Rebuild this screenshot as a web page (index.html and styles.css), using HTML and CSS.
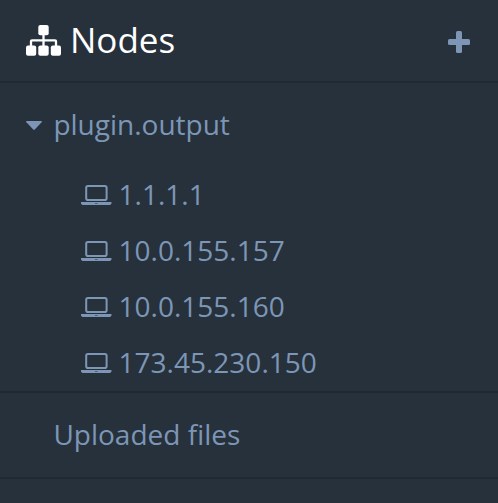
FILE: index.html
```
<!DOCTYPE html>
<html lang="en">
<head>
  <meta charset="UTF-8">
  <meta name="viewport" content="width=device-width, initial-scale=1.0">
  <title>Nodes</title>
  <link rel="stylesheet" href="styles.css">
</head>
<body>
  <svg class="symbols">
    <symbol id="laptop" viewBox="0 0 31 22">
      <rect x="5.200" y="2" width="20.400" height="14" rx="1.800" fill="none" stroke="currentColor" stroke-width="2"/>
      <path fill-rule="evenodd" fill="currentColor" d="M0 18h30.500v1.200c0 1-1.300 1.800-2.600 1.800h-25.300C1.300 21 0 20.200 0 19.200zM14 19v.6h2.700v-.6z"/>
    </symbol>
  </svg>

  <div class="sidebar">
    <header class="sidebar-header">
      <svg class="icon-sitemap" width="35" height="31" viewBox="0 0 35 31" fill="currentColor">
        <rect x="12.300" y="0" width="10.400" height="10.300" rx="2"/>
        <rect x="0" y="20.500" width="10.200" height="10.300" rx="2"/>
        <rect x="12.300" y="20.500" width="10.400" height="10.300" rx="2"/>
        <rect x="24.800" y="20.500" width="10.200" height="10.300" rx="2"/>
        <path d="M5 21v-4.700q0-1 1-1h23q1 0 1 1V21M17.500 9v12" fill="none" stroke="currentColor" stroke-width="2.300"/>
      </svg>
      <h1>Nodes</h1>
      <button class="add" aria-label="Add">
        <svg width="22" height="22" viewBox="0 0 22 22" fill="currentColor">
          <rect x="8" y="0" width="6" height="22" rx="1.500"/>
          <rect x="0" y="8" width="22" height="6" rx="1.500"/>
        </svg>
      </button>
    </header>

    <section class="group">
      <div class="group-title">
        <svg class="caret" width="16" height="9" viewBox="0 0 16 9"><path fill="currentColor" d="M.8 0h14.400q1.200.2.400 1.300L8.800 8.400q-.8.700-1.600 0L.4 1.300Q-.4.200.8 0z"/></svg>
        <span>plugin.output</span>
      </div>
      <ul class="nodes">
        <li><svg class="laptop"><use href="#laptop"/></svg>1.1.1.1</li>
        <li><svg class="laptop"><use href="#laptop"/></svg>10.0.155.157</li>
        <li><svg class="laptop"><use href="#laptop"/></svg>10.0.155.160</li>
        <li><svg class="laptop"><use href="#laptop"/></svg>173.45.230.150</li>
      </ul>
    </section>

    <section class="group">
      <div class="group-title no-caret">Uploaded files</div>
    </section>
  </div>
</body>
</html>
```
FILE: styles.css
```
* {
  box-sizing: border-box;
}
body {
  margin: 0;
  background: #26313c;
  color: #7d96b6;
  font-family: "Open Sans", "Noto Sans", sans-serif;
  font-size: 28px;
}
.symbols {
  display: none;
}
.sidebar {
  min-height: 503px;
}
.sidebar-header {
  display: flex;
  align-items: center;
  height: 83px;
  padding: 0 28px 0 26px;
  border-bottom: 2px solid #1f2933;
  color: #fff;
}
h1 {
  margin: 0 0 2px 9px;
  font-size: 35px;
  font-weight: 400;
  line-height: 79px;
}
.add {
  display: flex;
  margin-left: auto;
  margin-top: 3px;
  padding: 0;
  border: none;
  background: none;
  color: #7d96b6;
}
.group {
  border-bottom: 2px solid #1f2933;
}
.group-title {
  display: flex;
  align-items: center;
  height: 84px;
  padding: 0 0 2px 26px;
}
.caret {
  margin-top: 2px;
  margin-right: 11.4px;
}
.no-caret {
  padding-left: 53.4px;
}
.nodes {
  margin: 0;
  padding: 0;
  list-style: none;
}
.nodes li {
  display: flex;
  align-items: center;
  height: 56px;
  padding: 0 0 2px 81px;
}
.laptop {
  width: 31px;
  height: 22px;
  margin-top: 2px;
  margin-right: 6.6px;
}
```
